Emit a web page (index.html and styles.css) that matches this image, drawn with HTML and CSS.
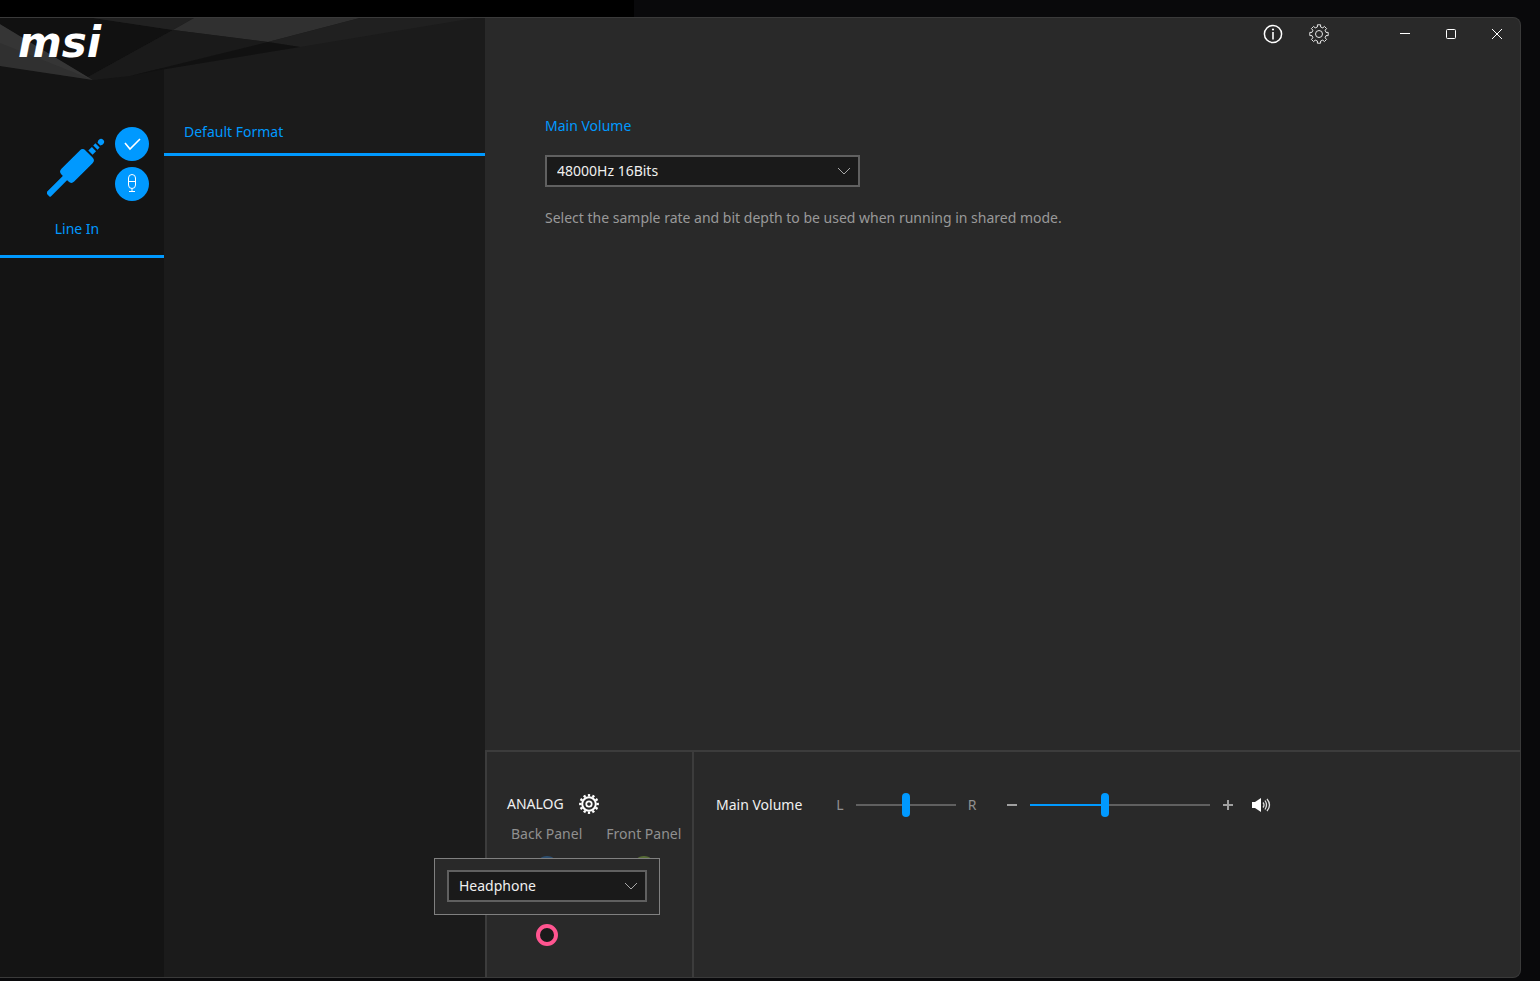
FILE: index.html
```
<!DOCTYPE html>
<html lang="en">
<head>
    <meta charset="UTF-8" />
    <title>MSI Audio Console</title>
    <link rel="stylesheet" href="styles.css">
</head>
<body>

    <div class="window">
        <div class="sidebar">
            <svg class="header-art" viewBox="0 0 485 64" aria-hidden="true">
                <path fill="#1b1b1b" d="M0 0H485V50H160L93 62L0 48Z" />
                <path fill="#303030" d="M0 6L88 59L93 62L0 48Z" />
                <path fill="#353535" d="M0 6L88 59L93 62L0 25Z" />
                <path fill="#111111" d="M0 0H93L173 12L88 59L0 6Z" />
                <path fill="#212121" d="M93 0H194L173 12Z" />
                <path fill="#303030" d="M194 0H360L268 24L173 12Z" />
                <path fill="#202020" d="M360 0H475L300 29L268 24Z" />
                <path fill="#1a1a1a" d="M173 12L268 24L130 58L93 62L88 59Z" />
                <path fill="#111111" d="M268 24L300 29L160 52L130 58Z" />
            </svg>
            <div class="logo">msi</div>

            <nav class="devices">
                <button class="device">
                    <svg class="jack-icon" width="60" height="62" viewBox="0 0 60 62" aria-hidden="true">
                        <g fill="#0099ff" transform="translate(30 30) rotate(-45)">
                            <rect x="-17" y="-9" width="34" height="18" rx="4" />
                            <rect x="-41" y="-3" width="27" height="6" rx="1" />
                            <rect x="19" y="-3" width="5" height="6" />
                            <rect x="26" y="-3" width="3" height="6" />
                            <path d="M31 -2L33 -3H34A3 3 0 0 1 34 3H33L31 2Z" />
                        </g>
                    </svg>
                    <span class="device-name">Line In</span>
                    <span class="badges">
                        <svg width="34" height="34" viewBox="0 0 34 34" aria-hidden="true">
                            <circle cx="17" cy="17" r="17" fill="#0099ff" />
                            <path d="M10 16L15 22L25 12" fill="none" stroke="#fff" stroke-width="1.6" />
                        </svg>
                        <svg width="34" height="34" viewBox="0 0 34 34" aria-hidden="true">
                            <circle cx="17" cy="17" r="17" fill="#0099ff" />
                            <g fill="none" stroke="#fff">
                                <rect x="13.5" y="7.5" width="7" height="14" rx="3.5" />
                                <path d="M13.5 14.5H20.5M17 21.5V24.5M14 24.5H20" />
                            </g>
                        </svg>
                    </span>
                </button>
            </nav>

            <div class="tabs">
                <button class="tab">Default Format</button>
            </div>
        </div>

        <div class="content">
            <div class="titlebar">
                <button class="title-btn" aria-label="Information">
                    <svg width="20" height="20" viewBox="-10 -10 20 20">
                        <circle r="8.6" fill="none" stroke="#fff" stroke-width="1.5" />
                        <circle cy="-4.5" r="1.1" fill="#fff" />
                        <path d="M0 -2V5.5" stroke="#fff" stroke-width="1.6" />
                    </svg>
                </button>
                <button class="title-btn settings" aria-label="Settings">
                    <svg width="20" height="20" viewBox="-10 -10 20 20" fill="none" stroke="#e6e6e6">
                        <path d="M-1.6 -7V-9.2H1.6V-7L3.8 -6.1L5.4 -7.6L7.6 -5.4L6.1 -3.8L7 -1.6H9.2V1.6H7L6.1 3.8L7.6 5.4L5.4 7.6L3.8 6.1L1.6 7V9.2H-1.6V7L-3.8 6.1L-5.4 7.6L-7.6 5.4L-6.1 3.8L-7 1.6H-9.2V-1.6H-7L-6.1 -3.8L-7.6 -5.4L-5.4 -7.6L-3.8 -6.1Z" />
                        <circle r="3.5" />
                    </svg>
                </button>
                <button class="title-btn" aria-label="Minimize">
                    <svg width="12" height="12" viewBox="0 0 12 12"><path d="M1 5.5H11" stroke="#fff" /></svg>
                </button>
                <button class="title-btn" aria-label="Maximize">
                    <svg width="12" height="12" viewBox="0 0 12 12"><rect x="1.5" y="1.5" width="9" height="9" rx="1" fill="none" stroke="#fff" /></svg>
                </button>
                <button class="title-btn" aria-label="Close">
                    <svg width="12" height="12" viewBox="0 0 12 12"><path d="M1 1L11 11M11 1L1 11" stroke="#fff" /></svg>
                </button>
            </div>

            <main class="format">
                <label class="format-title" for="format">Main Volume</label>
                <div class="dropdown">
                    <select id="format">
                        <option>48000Hz 16Bits</option>
                    </select>
                    <svg class="chevron" width="14" height="8" viewBox="0 0 14 8"><path d="M1 1L7 7L13 1" /></svg>
                </div>
                <p class="hint">Select the sample rate and bit depth to be used when running in shared mode.</p>
            </main>

            <footer class="bottom">
                <section class="analog">
                    <div class="analog-head">
                        <span>ANALOG</span>
                        <button class="gear-btn" aria-label="Analog settings">
                            <svg width="20" height="20" viewBox="-10 -10 20 20" fill="none" stroke="#fff">
                                <circle r="6.8" stroke-width="2" />
                                <circle r="8.7" stroke-width="2.4" pathLength="24" stroke-dasharray="1 1" stroke-dashoffset="0.5" />
                                <circle r="2.7" stroke-width="1.8" />
                            </svg>
                        </button>
                    </div>
                    <div class="panels">
                        <div class="panel">
                            <span>Back Panel</span>
                            <button class="jack blue" aria-label="Line in jack"></button>
                            <button class="jack green" aria-label="Line out jack"></button>
                            <button class="jack pink" aria-label="Microphone jack"></button>
                        </div>
                        <div class="panel">
                            <span>Front Panel</span>
                            <button class="jack green" aria-label="Headphone jack"></button>
                        </div>
                    </div>
                    <div class="popup">
                        <div class="dropdown">
                            <select aria-label="Jack device">
                                <option>Headphone</option>
                            </select>
                            <svg class="chevron" width="14" height="8" viewBox="0 0 14 8"><path d="M1 1L7 7L13 1" /></svg>
                        </div>
                    </div>
                </section>

                <section class="volume">
                    <span class="volume-title">Main Volume</span>
                    <div class="balance">
                        <span>L</span>
                        <input type="range" min="0" max="100" value="50" aria-label="Balance">
                        <span>R</span>
                    </div>
                    <div class="level">
                        <button aria-label="Volume down">
                            <svg width="12" height="12" viewBox="0 0 12 12"><path d="M1 6H11" stroke="#a0a0a0" stroke-width="2" /></svg>
                        </button>
                        <input class="wide" type="range" min="0" max="100" value="41" aria-label="Volume" style="--fill: 41%">
                        <button aria-label="Volume up">
                            <svg width="12" height="12" viewBox="0 0 12 12"><path d="M1 6H11M6 1V11" stroke="#a0a0a0" stroke-width="2" /></svg>
                        </button>
                    </div>
                    <button aria-label="Mute">
                        <svg width="20" height="16" viewBox="0 0 20 16">
                            <path d="M1 5H4L10 1V15L4 11H1Z" fill="#fff" />
                            <path d="M12 5.5Q14 8 12 10.5M14 3.5Q17 8 14 12.5M16 2Q21 8 16 14" fill="none" stroke="#ddd" stroke-width="1.3" />
                        </svg>
                    </button>
                </section>
            </footer>
        </div>
    </div>

</body>
</html>
```

FILE: styles.css
```
* {
    box-sizing: border-box;
}

body {
    display: flex;
    min-height: 100vh;
    margin: 0;
    padding: 17px 19px 3px 0;
    background: linear-gradient(#000, #000) 0 0 / 634px 17px no-repeat, #09090b;
    color: #f0f0f0;
    font-family: "Segoe UI", "Noto Sans", "Open Sans", sans-serif;
    font-size: 14px;
    line-height: 20px;
}

button {
    padding: 0;
    border: none;
    background: none;
    color: inherit;
    font: inherit;
    cursor: pointer;
}

svg {
    display: block;
}

.window {
    flex: 1;
    display: flex;
    border: 1px solid #3a3a3a;
    border-left: none;
    border-radius: 0 8px 8px 0;
    background: #292929;
    overflow: hidden;
}

/* left side */
.sidebar {
    position: relative;
    display: grid;
    grid-template-columns: 164px 321px;
    background: #1b1b1b;
}

.header-art {
    position: absolute;
    top: 0;
    left: 0;
    width: 100%;
}

.logo {
    position: absolute;
    top: 0;
    left: 18px;
    color: #fff;
    font: italic bold 42px/50px "DejaVu Sans", sans-serif;
}

.devices {
    padding-top: 100px;
    background: #141414;
}

.device {
    position: relative;
    display: flex;
    flex-direction: column;
    align-items: center;
    gap: 21px;
    width: 100%;
    padding: 18px 10px 16px 0;
    border-bottom: 3px solid #0099ff;
    color: #0099ff;
}

.badges {
    position: absolute;
    top: 9px;
    right: 15px;
    display: grid;
    gap: 6px;
}

.tabs {
    padding-top: 100px;
}

.tab {
    width: 100%;
    padding: 4px 20px 11px;
    border-bottom: 3px solid #0099ff;
    color: #0099ff;
    text-align: left;
}

/* right side */
.content {
    flex: 1;
    display: flex;
    flex-direction: column;
}

.titlebar {
    display: flex;
    justify-content: flex-end;
}

.title-btn {
    display: grid;
    place-items: center;
    width: 46px;
    height: 32px;
}

.settings {
    margin-right: 40px;
}

.format {
    flex: 1;
    padding: 66px 60px;
}

.format-title {
    display: block;
    margin-bottom: 19px;
    color: #0099ff;
}

.format .dropdown {
    width: 315px;
}

.dropdown {
    display: grid;
    align-items: center;
}

.dropdown select {
    grid-area: 1 / 1;
    width: 100%;
    height: 32px;
    padding: 0 32px 0 10px;
    appearance: none;
    border: 2px solid #606060;
    border-radius: 0;
    background: #1a1a1a;
    color: #f0f0f0;
    font: inherit;
}

.chevron {
    grid-area: 1 / 1;
    justify-self: end;
    margin-right: 9px;
    fill: none;
    stroke: #a8a8a8;
    pointer-events: none;
}

.hint {
    margin: 21px 0 0;
    color: #999;
}

.bottom {
    display: flex;
    min-height: 227px;
    border-top: 2px solid #3c3c3c;
    border-left: 2px solid #3c3c3c;
}

.analog {
    position: relative;
    width: 207px;
    padding-top: 42px;
    border-right: 2px solid #3c3c3c;
}

.analog-head {
    display: flex;
    align-items: center;
    gap: 15px;
    padding-left: 20px;
}

.panels {
    display: flex;
    gap: 24px;
    padding: 10px 0 0 24px;
    color: #909090;
}

.panel {
    display: flex;
    flex-direction: column;
    align-items: center;
    gap: 12px;
}

.jack {
    width: 22px;
    height: 22px;
    border: 4px solid;
    border-radius: 50%;
    background: #1a1a1a;
}

.blue {
    border-color: #2c4d6e;
}

.green {
    border-color: #566b35;
}

.pink {
    border-color: #ff5590;
}

.popup {
    position: absolute;
    top: 106px;
    left: -53px;
    width: 226px;
    padding: 11px 12px 12px;
    border: 1px solid #808080;
    background: #292929;
}

.volume {
    flex: 1;
    display: flex;
    align-items: center;
    align-self: flex-start;
    padding: 41px 22px 0;
}

.volume-title {
    margin-right: 34px;
}

.balance,
.level {
    display: flex;
    align-items: center;
    gap: 12px;
    color: #909090;
}

.balance {
    margin-right: 28px;
}

.level {
    gap: 10px;
    margin-right: 15px;
}

.level button {
    padding: 0 2px;
}

input[type="range"] {
    width: 100px;
    height: 24px;
    margin: 0;
    appearance: none;
    background: none;
}

input[type="range"].wide {
    width: 180px;
}

input[type="range"]::-webkit-slider-runnable-track {
    height: 2px;
    background: linear-gradient(to right, #0099ff var(--fill, 0%), #606060 var(--fill, 0%));
}

input[type="range"]::-webkit-slider-thumb {
    width: 8px;
    height: 24px;
    margin-top: -11px;
    appearance: none;
    border-radius: 4px;
    background: #0099ff;
}
```
